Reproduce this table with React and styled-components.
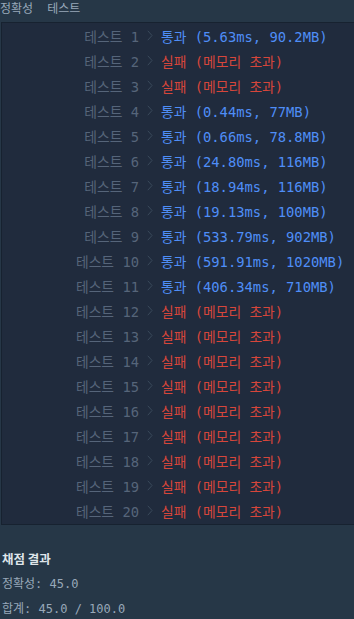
import React from 'react';
import styled, { createGlobalStyle } from 'styled-components';

const Global = createGlobalStyle`
  html, body {
    margin: 0;
    padding: 0;
    background: #263747;
  }
  body {
    font-family: "DejaVu Sans Mono", "Noto Sans CJK KR", monospace;
  }
`;

const Page = styled.div`
  width: 354px;
  height: 619px;
  overflow: hidden;
  background: #263747;
`;

const Tabs = styled.div`
  display: flex;
  gap: 14px;
  height: 22px;
  align-items: flex-start;
  font-family: "Noto Sans CJK KR", sans-serif;
  font-size: 12px;
  color: #98a8b9;
`;

const Tab = styled.span`
  line-height: 16px;
`;

const Panel = styled.div`
  margin-left: 1px;
  background: #202b3d;
  border-top: 1px solid #172230;
  border-left: 1px solid #172230;
  border-bottom: 1px solid #172230;
  padding-bottom: 1px;
`;

const Row = styled.div`
  display: flex;
  align-items: center;
  height: 25px;
  font-size: 13.8px;
`;

const Label = styled.span`
  width: 137px;
  text-align: right;
  color: #56657a;
  white-space: pre;
`;

const Chevron = styled.span`
  width: 22px;
  display: flex;
  justify-content: center;
  color: #3a4a5b;
`;

const Result = styled.span`
  color: ${p => (p.pass ? '#4f8ef7' : '#d6463b')};
  white-space: pre;
`;

const Summary = styled.div`
  padding: 21px 0 0 2px;
  display: flex;
  flex-direction: column;
`;

const SummaryTitle = styled.div`
  font-family: "Noto Sans CJK KR", sans-serif;
  font-size: 12.5px;
  font-weight: 700;
  color: #dfe5ea;
  height: 24px;
  display: flex;
  align-items: center;
`;

const SummaryLine = styled.div`
  font-size: 12px;
  color: #98a8b9;
  height: 25px;
  display: flex;
  align-items: center;
`;

const results = [
  [true, '5.63ms, 90.2MB'],
  [false],
  [false],
  [true, '0.44ms, 77MB'],
  [true, '0.66ms, 78.8MB'],
  [true, '24.80ms, 116MB'],
  [true, '18.94ms, 116MB'],
  [true, '19.13ms, 100MB'],
  [true, '533.79ms, 902MB'],
  [true, '591.91ms, 1020MB'],
  [true, '406.34ms, 710MB'],
  [false],
  [false],
  [false],
  [false],
  [false],
  [false],
  [false],
  [false],
  [false],
];

const ChevronIcon = () => (
  <svg width="6" height="11" viewBox="0 0 6 11">
    <path d="M0.8 0.8 L5 5.5 L0.8 10.2" fill="none" stroke="currentColor" strokeWidth="1" />
  </svg>
);

export default function App() {
  return (
    <Page>
      <Global />
      <Tabs>
        <Tab>정확성</Tab>
        <Tab>테스트</Tab>
      </Tabs>
      <Panel>
        {results.map(([pass, stat], i) => (
          <Row key={i}>
            <Label>테스트 {i + 1}</Label>
            <Chevron><ChevronIcon /></Chevron>
            <Result pass={pass}>
              {pass ? `통과 (${stat})` : '실패 (메모리 초과)'}
            </Result>
          </Row>
        ))}
      </Panel>
      <Summary>
        <SummaryTitle>채점 결과</SummaryTitle>
        <SummaryLine>정확성: 45.0</SummaryLine>
        <SummaryLine>합계: 45.0 / 100.0</SummaryLine>
      </Summary>
    </Page>
  );
}
